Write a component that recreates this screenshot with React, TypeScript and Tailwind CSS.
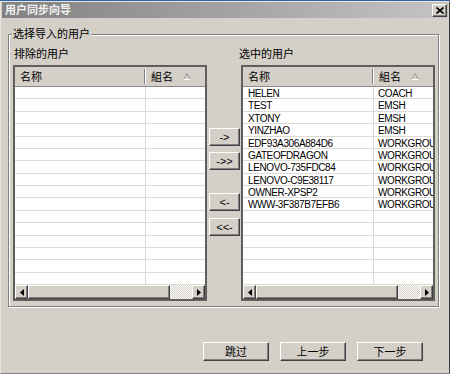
import React from "react";

const raised =
  "border border-t-white border-l-white border-r-[#404040] border-b-[#404040] shadow-[inset_-1px_-1px_0_#808080] bg-[#d4d0c8]";

const rightData: [string, string][] = [
  ["HELEN", "COACH"],
  ["TEST", "EMSH"],
  ["XTONY", "EMSH"],
  ["YINZHAO", "EMSH"],
  ["EDF93A306A884D6", "WORKGROUP"],
  ["GATEOFDRAGON", "WORKGROUP"],
  ["LENOVO-735FDC84", "WORKGROUP"],
  ["LENOVO-C9E38117", "WORKGROUP"],
  ["OWNER-XPSP2", "WORKGROUP"],
  ["WWW-3F387B7EFB6", "WORKGROUP"],
];

function SortTri() {
  return (
    <svg width="8" height="7" viewBox="0 0 8 7" className="ml-[10px]">
      <path d="M0.5 6.5 L4 0.5 L7.5 6.5" fill="none" stroke="#9a9a9a" strokeWidth="1" />
      <path d="M0.5 6.5 L7.5 6.5" fill="none" stroke="#ffffff" strokeWidth="1" />
    </svg>
  );
}

function Scrollbar() {
  return (
    <div className="h-[14px] flex shrink-0">
      <div className={`w-[13px] h-[14px] flex items-center justify-center ${raised}`}>
        <svg width="4" height="7" viewBox="0 0 4 7">
          <path d="M4 0 L0 3.5 L4 7 Z" fill="#000" />
        </svg>
      </div>
      <div className={`w-[142px] h-[14px] ${raised}`} />
      <div className="flex-1 h-[14px] bg-[repeating-conic-gradient(#d4d0c8_0_25%,#ffffff_0_50%)] bg-[length:2px_2px]" />
      <div className={`w-[13px] h-[14px] flex items-center justify-center ${raised}`}>
        <svg width="4" height="7" viewBox="0 0 4 7">
          <path d="M0 0 L4 3.5 L0 7 Z" fill="#000" />
        </svg>
      </div>
    </div>
  );
}

function ListView({ rows }: { rows: [string, string][] }) {
  return (
    <div className="w-[194px] h-[236px] border-2 border-[#5f5f5f] bg-white flex flex-col">
      <div className="h-[20px] flex bg-[#d4d0c8] border-b border-b-[#8a8a8a] shrink-0 text-[11px] leading-[12px]">
        <div className="w-[131px] relative flex items-center pl-[5px]">
          名称
          <div className="absolute right-0 top-[2px] bottom-[2px] w-[2px] border-l border-l-[#808080] border-r border-r-white" />
        </div>
        <div className="flex-1 flex items-center pl-[5px]">
          組名
          <SortTri />
        </div>
      </div>
      <div className="flex-1 flex flex-col overflow-hidden">
        {Array.from({ length: 16 }).map((_, i) => {
          const r = rows[i];
          return (
            <div
              key={i}
              className="h-[12.375px] shrink-0 flex border-b border-b-[#dedbd4] text-[10px] leading-[11px] tracking-[-0.4px]"
            >
              <div className="w-[131px] border-r border-r-[#dcd9d2] pl-[5px] pt-px whitespace-nowrap overflow-hidden">
                {r ? r[0] : ""}
              </div>
              <div className="flex-1 pl-[4px] pt-px whitespace-nowrap overflow-hidden">{r ? r[1] : ""}</div>
            </div>
          );
        })}
      </div>
      <Scrollbar />
    </div>
  );
}

function SmallBtn({ label }: { label: string }) {
  return (
    <div className={`w-[31px] h-[18px] flex items-center justify-center text-[11px] leading-[11px] ${raised}`}>
      {label}
    </div>
  );
}

function BigBtn({ label }: { label: string }) {
  return (
    <div className={`w-[66px] h-[19px] flex items-center justify-center text-[11px] leading-[12px] ${raised}`}>
      {label}
    </div>
  );
}

export default function App() {
  return (
    <div className="w-[450px] h-[374px] bg-[#d4d0c8] flex flex-col overflow-hidden text-black font-['Liberation_Sans','Noto_Sans_CJK_SC',sans-serif]">
      <div className="h-px bg-[#3163a5] shrink-0" />
      <div className="flex-1 flex flex-col border-t border-t-[#e8e6e0] border-l border-l-[#e8e6e0] border-r border-r-[#404040] border-b border-b-[#808080] px-px">
        <div className="h-[16px] shrink-0 flex items-center justify-between bg-linear-to-r from-[#828282] to-[#c4c4c4] pl-[3px] pr-[1px]">
          <span className="text-[#f2f2f2] font-bold text-[11px] leading-[12px]">用户同步向导</span>
          <div className={`w-[15px] h-[13px] flex items-center justify-center ${raised}`}>
            <svg width="8" height="7" viewBox="0 0 8 7">
              <path d="M0.5 0.5 L7.5 6.5 M7.5 0.5 L0.5 6.5" stroke="#000" strokeWidth="1.6" />
            </svg>
          </div>
        </div>

        <div className="relative ml-[6px] mt-[16px] w-[431px] h-[273px] border border-[#808080] shadow-[1px_1px_0_#fff,inset_1px_1px_0_#fff] shrink-0">
          <span className="absolute left-[3px] top-[-7px] bg-[#d4d0c8] px-px text-[11px] leading-[12px]">
            选择导入的用户
          </span>
          <div className="flex pl-[4px]">
            <div className="flex flex-col w-[194px]">
              <div className="mt-[13px] h-[12px] text-[11px] leading-[12px] pl-px">排除的用户</div>
              <div className="mt-[5px]">
                <ListView rows={[]} />
              </div>
            </div>
            <div className="ml-[2px] w-[31px] flex flex-col pt-[93px]">
              <SmallBtn label="->" />
              <div className="mt-[6px]">
                <SmallBtn label="->>" />
              </div>
              <div className="mt-[23px]">
                <SmallBtn label="<-" />
              </div>
              <div className="mt-[7px]">
                <SmallBtn label="<<-" />
              </div>
            </div>
            <div className="ml-[1px] flex flex-col w-[194px]">
              <div className="mt-[13px] h-[12px] text-[11px] leading-[12px] ml-[-2px]">选中的用户</div>
              <div className="mt-[5px]">
                <ListView rows={rightData} />
              </div>
            </div>
          </div>
        </div>

        <div className="flex gap-[11px] ml-[201px] mt-[35px]">
          <BigBtn label="跳过" />
          <BigBtn label="上一步" />
          <BigBtn label="下一步" />
        </div>
      </div>
    </div>
  );
}
